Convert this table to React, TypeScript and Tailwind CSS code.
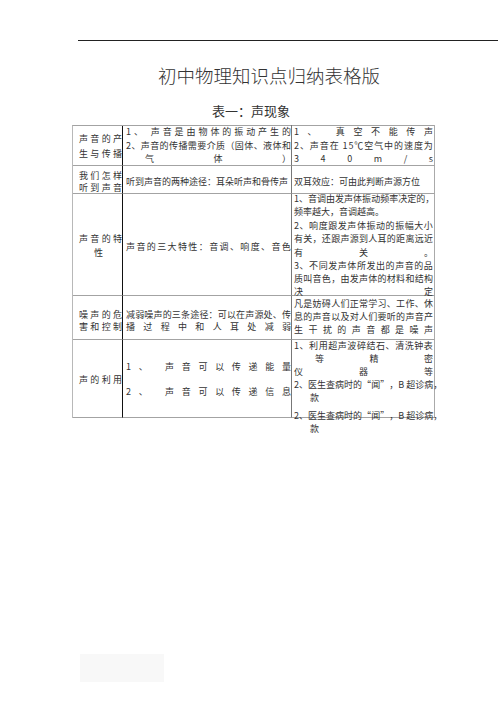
import React from 'react';

function J({ t, className = '' }: { t: string; className?: string }) {
  return (
    <div className={`flex justify-between whitespace-nowrap ${className}`}>
      {Array.from(t).map((c, i) => (
        <span key={i}>{c === ' ' ? '\u00a0' : c}</span>
      ))}
    </div>
  );
}

const c1 = 'border-b border-r border-b-[#a3a3a3] border-r-[#111] pl-[6px] flex flex-col justify-center';
const c2 = 'border-b border-r border-b-[#a3a3a3] border-r-[#777] pl-[3px] flex flex-col';
const c3 = 'border-b border-r border-b-[#a3a3a3] border-r-[#aaa] pl-[2px] pr-[1px] flex flex-col';

export default function App() {
  return (
    <div className="w-[504px] h-[713px] bg-white overflow-hidden font-['Noto_Sans_CJK_SC',sans-serif] text-[#333]">
      <div className="pt-[40px] pl-[78px]">
        <div className="w-[420px] h-px bg-[#222]" />
      </div>
      <div className="mt-[23px] pl-[158px] text-[18.5px] leading-[22px] font-light whitespace-nowrap text-[#333]">
        初中物理知识点归纳表格版
      </div>
      <div className="mt-[17px] pl-[212px] text-[13px] leading-[16px] whitespace-nowrap text-[#333]">
        表一：声现象
      </div>
      <div className="ml-[72px] mt-[6px] grid w-fit grid-cols-[50px_169px_143px] grid-rows-[40px_28px_102px_44px_78px] border-l border-t border-l-[#b8b8b8] border-t-[#a3a3a3] text-[9px]">
        {/* Row 1 */}
        <div className={`${c1} leading-[15px]`}>
          <J t="声音的产" />
          <J t="生与传播" />
        </div>
        <div className={`${c2} leading-[13.5px] -mt-[1px]`}>
          <J t="1、 声音是由物体的振动产生的" />
          <J t="2、声音的传播需要介质（固体、液体和" />
          <J t="气体）" className="pl-[19px]" />
        </div>
        <div className={`${c3} leading-[13.5px] -mt-[1px]`}>
          <J t="1、 真空不能传声" />
          <J t="2、声音在 15℃空气中的速度为" />
          <J t="340m/s" />
        </div>

        {/* Row 2 */}
        <div className={`${c1} leading-[12px] pt-[4px]`}>
          <J t="我们怎样" />
          <J t="听到声音" />
        </div>
        <div className={`${c2} justify-center leading-[13px] pt-[4px]`}>
          <div className="whitespace-nowrap">听到声音的两种途径：耳朵听声和骨传声</div>
        </div>
        <div className={`${c3} justify-center leading-[13px] pt-[4px]`}>
          <div className="whitespace-nowrap">双耳效应：可由此判断声源方位</div>
        </div>

        {/* Row 3 */}
        <div className={`${c1} leading-[14px] pt-[3px]`}>
          <J t="声音的特" />
          <div className="text-center pr-[4px]">性</div>
        </div>
        <div className={`${c2} justify-center leading-[13px] pt-[3px]`}>
          <J t="声音的三大特性：音调、响度、音色" />
        </div>
        <div className={`${c3} leading-[13.4px]`}>
          <div className="-mt-[2px]">
            <J t="1、音调由发声体振动频率决定的，" />
            <div className="whitespace-nowrap">频率越大，音调越高。</div>
            <J t="2、响度跟发声体振动的振幅大小" />
            <J t="有关，还跟声源到人耳的距离远近" />
            <J t="有关。" />
            <J t="3、不同发声体所发出的声音的品" />
            <J t="质叫音色，由发声体的材料和结构" />
            <J t="决定" className="leading-[11px]" />
          </div>
        </div>

        {/* Row 4 */}
        <div className={`${c1} leading-[12px] pt-[6px]`}>
          <J t="噪声的危" />
          <J t="害和控制" />
        </div>
        <div className={`${c2} justify-center leading-[12px] pt-[6px]`}>
          <J t="减弱噪声的三条途径：可以在声源处、传" />
          <J t="播过程中和人耳处减弱" />
        </div>
        <div className={`${c3} leading-[13px] pt-[1px]`}>
          <J t="凡是妨碍人们正常学习、工作、休" />
          <J t="息的声音以及对人们要听的声音产" />
          <J t="生干扰的声音都是噪声" />
        </div>

        {/* Row 5 */}
        <div className={`${c1} leading-[13px] pt-[2px]`}>
          <J t="声的利用" />
        </div>
        <div className={`${c2} justify-center leading-[25px]`}>
          <J t="1、 声音可以传递能量" />
          <J t="2、 声音可以传递信息" />
        </div>
        <div className={`${c3} leading-[13px]`}>
          <div className="-mt-[1px]">
            <J t="1、利用超声波碎结石、清洗钟表" />
            <J t="等精密" className="pl-[21px]" />
            <J t="仪器等" />
            <J t="2、医生查病时的“闻”，B 超诊病，" />
            <div className="pl-[16px]">款</div>
            <J t="2、医生查病时的“闻”，B 超诊病，" className="mt-[5px]" />
            <div className="pl-[16px]">款</div>
          </div>
        </div>
      </div>
      <div className="ml-[80px] mt-[236px] w-[84px] h-[28px] bg-[#f8f8f8]" />
    </div>
  );
}
